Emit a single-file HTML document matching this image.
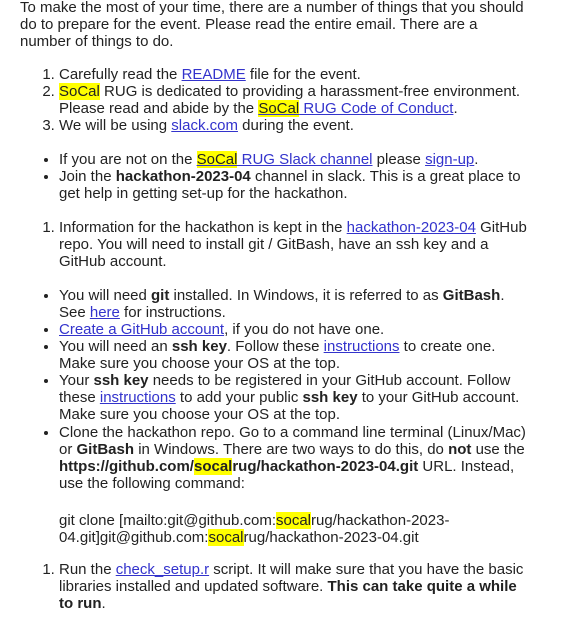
<!DOCTYPE html>
<html><head><meta charset="utf-8"><style>
body{margin:0;background:#fff;}
.w{position:absolute;left:20px;top:-1px;font-family:"Liberation Sans",Arial,sans-serif;font-size:15px;line-height:17px;color:#222;white-space:nowrap;}
p{margin:0;}
ol,ul{margin:17px 0 0 0;padding-left:39px;}
li{margin:0;}
a{color:#3333cc;text-decoration:underline;}
mark{background:#ffff00;color:#222;padding:0;}
b{color:#222;}
</style></head><body><div class="w">
<p>To make the most of your time, there are a number of things that you should<br>do to prepare for the event. Please read the entire email. There are a<br>number of things to do.</p>
<ol style="margin-top:16px">
<li>Carefully read the <a>README</a> file for the event.</li>
<li><mark>SoCal</mark> RUG is dedicated to providing a harassment-free environment.<br>Please read and abide by the <a><mark>SoCal</mark> RUG Code of Conduct</a>.</li>
<li>We will be using <a>slack.com</a> during the event.</li>
</ol>
<ul>
<li>If you are not on the <a><mark>SoCal</mark> RUG Slack channel</a> please <a>sign-up</a>.</li>
<li>Join the <b>hackathon-2023-04</b> channel in slack. This is a great place to<br>get help in getting set-up for the hackathon.</li>
</ul>
<ol>
<li>Information for the hackathon is kept in the <a>hackathon-2023-04</a> GitHub<br>repo. You will need to install git / GitBash, have an ssh key and a<br>GitHub account.</li>
</ol>
<ul>
<li>You will need <b>git</b> installed. In Windows, it is referred to as <b>GitBash</b>.<br>See <a>here</a> for instructions.</li>
<li><a>Create a GitHub account</a>, if you do not have one.</li>
<li>You will need an <b>ssh key</b>. Follow these <a>instructions</a> to create one.<br>Make sure you choose your OS at the top.</li>
<li>Your <b>ssh key</b> needs to be registered in your GitHub account. Follow<br>these <a>instructions</a> to add your public <b>ssh key</b> to your GitHub account.<br>Make sure you choose your OS at the top.</li>
<li style="margin-top:1px">Clone the hackathon repo. Go to a command line terminal (Linux/Mac)<br>or <b>GitBash</b> in Windows. There are two ways to do this, do <b>not</b> use the<br><b>https://github.com/<mark>socal</mark>rug/hackathon-2023-04.git</b> URL. Instead,<br>use the following command:<br><br><span style="display:block;margin-top:3px">git clone [mailto:git@github.com:<mark>socal</mark>rug/hackathon-2023-<br>04.git]git@github.com:<mark>socal</mark>rug/hackathon-2023-04.git</span></li>
</ul>
<ol style="margin-top:15px">
<li>Run the <a>check_setup.r</a> script. It will make sure that you have the basic<br>libraries installed and updated software. <b>This can take quite a while<br>to run</b>.</li>
</ol>
</div></body></html>
